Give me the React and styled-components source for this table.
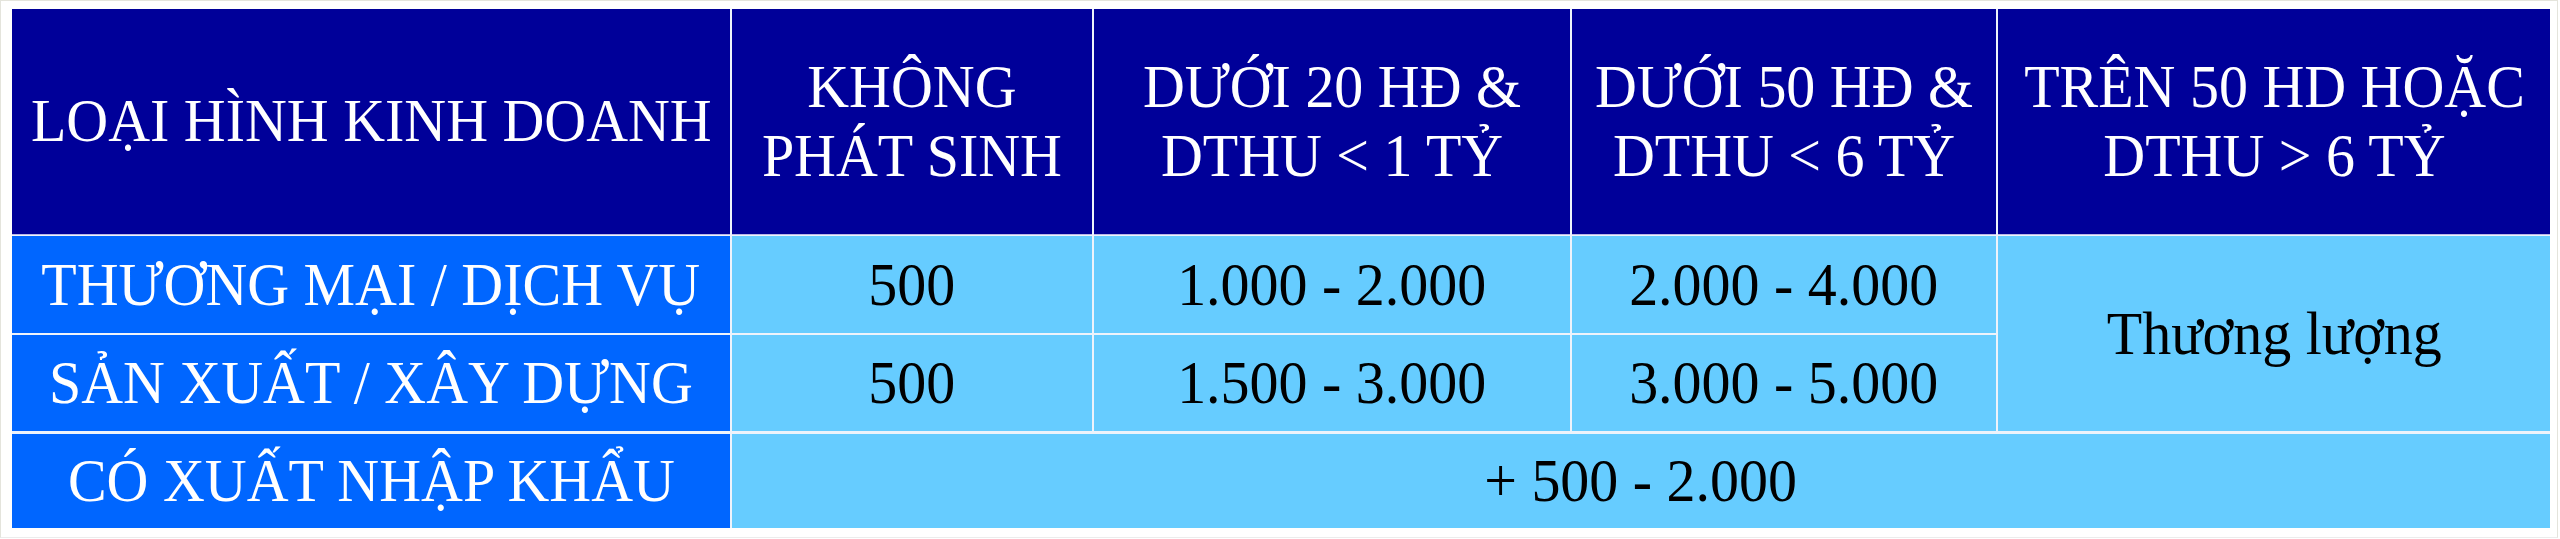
import styled, { createGlobalStyle } from 'styled-components';

const GlobalStyle = createGlobalStyle`
  html, body {
    margin: 0;
    padding: 0;
    background: #ffffff;
  }
  body {
    font-family: "Liberation Serif", "Times New Roman", serif;
  }
`;

const Sheet = styled.div`
  width: 2558px;
  height: 538px;
  box-sizing: border-box;
  padding: 8px 0 0 11px;
  border: 1px solid #e4e4dc;
  border-bottom-color: #ececec;
  background: #ffffff;
`;

const Table = styled.div`
  display: grid;
  grid-template-columns: 718px 360px 476px 424px 552px;
  grid-template-rows: 225px 97px 96px 95px;
  gap: 2px;
  width: 2538px;
  background: #eef3fb;
`;

const Cell = styled.div`
  display: flex;
  align-items: center;
  justify-content: center;
  text-align: center;
  font-size: 61px;
  line-height: 1.1;
  white-space: nowrap;
  grid-column: ${p => p.$colSpan ? `span ${p.$colSpan}` : 'auto'};
  grid-row: ${p => p.$rowSpan ? `span ${p.$rowSpan}` : 'auto'};
  margin-top: ${p => p.$gapTop ? '1px' : '0'};
`;

const HeadCell = styled(Cell)`
  background: #000099;
  color: #ffffff;
  line-height: 1.13;
  border-bottom: 1px solid #b9b9e6;
  margin-bottom: -1px;
`;

const LabelCell = styled(Cell)`
  background: #0066ff;
  color: #ffffff;
`;

const ValueCell = styled(Cell)`
  background: #66ccff;
  color: #000000;
`;

/* the sheet's Times glyphs are a little narrower than they are tall */
const Text = styled.span`
  display: inline-block;
  transform: scaleX(0.95);
`;

const headers = [
  ['LOẠI HÌNH KINH DOANH'],
  ['KHÔNG', 'PHÁT SINH'],
  ['DƯỚI 20 HĐ &', 'DTHU < 1 TỶ'],
  ['DƯỚI 50 HĐ &', 'DTHU < 6 TỶ'],
  ['TRÊN 50 HD HOẶC', 'DTHU > 6 TỶ'],
];

export default function App() {
  return (
    <>
      <GlobalStyle />
      <Sheet>
        <Table>
          {headers.map((lines, i) => (
            <HeadCell key={i}>
              <Text>
                {lines.map((l, j) => <div key={j}>{l}</div>)}
              </Text>
            </HeadCell>
          ))}

          <LabelCell><Text>THƯƠNG MẠI / DỊCH VỤ</Text></LabelCell>
          <ValueCell><Text>500</Text></ValueCell>
          <ValueCell><Text>1.000 - 2.000</Text></ValueCell>
          <ValueCell><Text>2.000 - 4.000</Text></ValueCell>
          <ValueCell $rowSpan={2}><Text>Thương lượng</Text></ValueCell>

          <LabelCell><Text>SẢN XUẤT / XÂY DỰNG</Text></LabelCell>
          <ValueCell><Text>500</Text></ValueCell>
          <ValueCell><Text>1.500 - 3.000</Text></ValueCell>
          <ValueCell><Text>3.000 - 5.000</Text></ValueCell>

          <LabelCell $gapTop><Text>CÓ XUẤT NHẬP KHẨU</Text></LabelCell>
          <ValueCell $gapTop $colSpan={4}><Text>+ 500 - 2.000</Text></ValueCell>
        </Table>
      </Sheet>
    </>
  );
}
